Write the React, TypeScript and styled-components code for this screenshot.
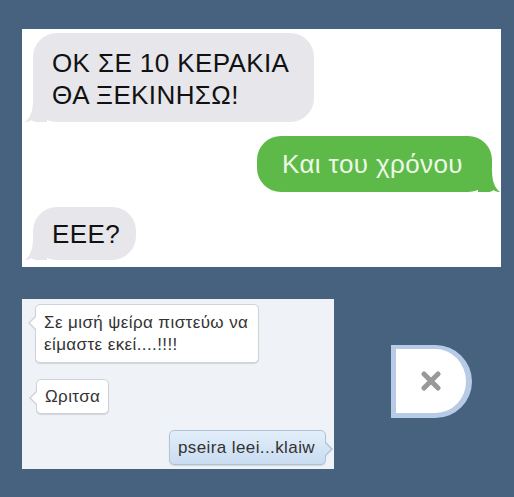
import React from "react";
import styled, { createGlobalStyle, css } from "styled-components";

const GlobalStyle = createGlobalStyle`
  html, body {
    margin: 0;
    padding: 0;
    background: #46627f;
  }
  body {
    font-family: "Liberation Sans", Arial, sans-serif;
  }
`;

const Page = styled.div`
  width: 514px;
  height: 497px;
  box-sizing: border-box;
  padding: 29px 0 0 22px;
  background: #46627f;
  overflow: hidden;
`;

const PhonePanel = styled.div`
  width: 479px;
  height: 238px;
  box-sizing: border-box;
  padding: 4px 9px 0 11px;
  background: #ffffff;
  display: flex;
  flex-direction: column;
`;

const IBubble = styled.div<{ $sent?: boolean }>`
  position: relative;
  align-self: ${(p) => (p.$sent ? "flex-end" : "flex-start")};
  font-size: 26px;
  line-height: 32px;
  letter-spacing: 0.4px;
  border-radius: 24px;
  background: ${(p) => (p.$sent ? "#5dba49" : "#e6e6eb")};
  color: ${(p) => (p.$sent ? "#ecf8e6" : "#111111")};
`;

const Tail = styled.svg<{ $sent?: boolean }>`
  position: absolute;
  bottom: 0;
  width: 22px;
  height: 22px;
  ${(p) =>
    p.$sent
      ? css`
          right: -8px;
          transform: scaleX(-1);
        `
      : css`
          left: -8px;
        `}
`;

const BubbleText = styled.div`
  position: relative;
`;

const BottomRow = styled.div`
  display: flex;
  align-items: flex-start;
  margin-top: 32px;
`;

const ChatPanel = styled.div`
  width: 312px;
  height: 170px;
  box-sizing: border-box;
  padding: 5px 8px 0 13px;
  background: #eff2f6;
  display: flex;
  flex-direction: column;
`;

const arrowBase = css`
  content: "";
  position: absolute;
  top: 11px;
  width: 0;
  height: 0;
  border-top: 7px solid transparent;
  border-bottom: 7px solid transparent;
`;

const FbBubble = styled.div<{ $mine?: boolean }>`
  position: relative;
  align-self: ${(p) => (p.$mine ? "flex-end" : "flex-start")};
  font-size: 17px;
  line-height: 22px;
  letter-spacing: 0.4px;
  color: #333333;
  border-radius: 5px;
  border: 1px solid ${(p) => (p.$mine ? "#aec3da" : "#cfd3d8")};
  background: ${(p) =>
    p.$mine ? "linear-gradient(#e3eefa, #c9dcf0)" : "#ffffff"};
  box-shadow: 0 1px 1px rgba(0, 0, 0, 0.12);
  padding: 7px 10px 6px 8px;

  &::before {
    ${arrowBase}
    ${(p) =>
      p.$mine
        ? css`
            right: -8px;
            border-left: 7px solid #aec3da;
          `
        : css`
            left: -8px;
            border-right: 7px solid #cfd3d8;
          `}
  }
  &::after {
    ${arrowBase}
    top: 12px;
    border-top-width: 6px;
    border-bottom-width: 6px;
    ${(p) =>
      p.$mine
        ? css`
            right: -6px;
            border-left: 6px solid #d6e4f4;
          `
        : css`
            left: -6px;
            border-right: 6px solid #ffffff;
          `}
  }
`;

const CloseButton = styled.button`
  margin: 46px 0 0 57px;
  width: 81px;
  height: 73px;
  box-sizing: border-box;
  padding: 0;
  background: #ffffff;
  border: solid #b8cbe6;
  border-width: 4px 6px 5px 5px;
  border-radius: 0 38px 38px 0;
  display: flex;
  align-items: center;
  justify-content: center;
  cursor: pointer;
`;

const TailPath = ({ sent }: { sent?: boolean }) => (
  <Tail $sent={sent} viewBox="0 0 22 22">
    <path
      d="M8 0 L22 0 L22 22 L12 22 C10 22 8 21.5 6.5 20 C4.5 21.5 2.5 22 0 22 C5 18 8 12 8 0 Z"
      fill={sent ? "#5dba49" : "#e6e6eb"}
    />
  </Tail>
);

export default function App() {
  return (
    <Page>
      <GlobalStyle />
      <PhonePanel>
        <IBubble style={{ padding: "14px 25px 11px 19px" }}>
          <TailPath />
          <BubbleText>
            ΟΚ ΣΕ 10 ΚΕΡΑΚΙΑ
            <br />
            ΘΑ ΞΕΚΙΝΗΣΩ!
          </BubbleText>
        </IBubble>
        <IBubble $sent style={{ padding: "12px 29px 12px 25px", marginTop: 14 }}>
          <TailPath sent />
          <BubbleText>Και του χρόνου</BubbleText>
        </IBubble>
        <IBubble style={{ padding: "11px 16px 10px 19px", marginTop: 15 }}>
          <TailPath />
          <BubbleText>ΕΕΕ?</BubbleText>
        </IBubble>
      </PhonePanel>
      <BottomRow>
        <ChatPanel>
          <FbBubble>
            Σε μισή ψείρα πιστεύω να
            <br />
            είμαστε εκεί....!!!!
          </FbBubble>
          <FbBubble style={{ marginTop: 16, marginLeft: 1, padding: "6px 8px 5px 8px" }}>
            Ωριτσα
          </FbBubble>
          <FbBubble $mine style={{ marginTop: 16, padding: "6px 10px 5px 8px" }}>
            pseira leei...klaiw
          </FbBubble>
        </ChatPanel>
        <CloseButton aria-label="close">
          <svg width="20" height="20" viewBox="0 0 20 20">
            <path
              d="M3 3 L17 17 M17 3 L3 17"
              stroke="#999999"
              strokeWidth="5"
              strokeLinecap="round"
            />
          </svg>
        </CloseButton>
      </BottomRow>
    </Page>
  );
}
